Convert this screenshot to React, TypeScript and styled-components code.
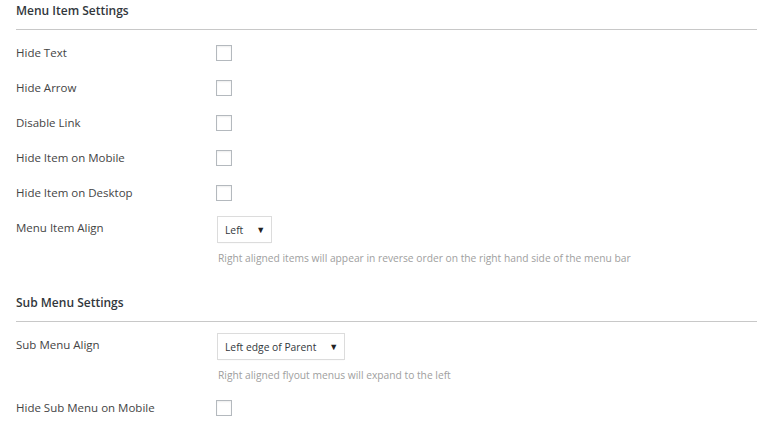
import React from "react";
import styled, { createGlobalStyle } from "styled-components";

const GlobalStyle = createGlobalStyle`
  body {
    margin: 0;
    background: #fff;
    font-family: "Open Sans", "Noto Sans", sans-serif;
  }
`;

type Field =
  | { kind: "check"; label: string }
  | { kind: "select"; label: string; value: string; hint: string };

const menuItemFields: Field[] = [
  { kind: "check", label: "Hide Text" },
  { kind: "check", label: "Hide Arrow" },
  { kind: "check", label: "Disable Link" },
  { kind: "check", label: "Hide Item on Mobile" },
  { kind: "check", label: "Hide Item on Desktop" },
  {
    kind: "select",
    label: "Menu Item Align",
    value: "Left",
    hint: "Right aligned items will appear in reverse order on the right hand side of the menu bar",
  },
];

const subMenuFields: Field[] = [
  {
    kind: "select",
    label: "Sub Menu Align",
    value: "Left edge of Parent",
    hint: "Right aligned flyout menus will expand to the left",
  },
  { kind: "check", label: "Hide Sub Menu on Mobile" },
];

const Settings = ({ title, fields, first }: { title: string; fields: Field[]; first?: boolean }) => (
  <Section $first={first}>
    <SectionTitle>{title}</SectionTitle>
    <Rows>
      {fields.map((f) => (
        <Row key={f.label}>
          <Label>{f.label}</Label>
          {f.kind === "check" ? (
            <Control $top={10}>
              <Checkbox />
            </Control>
          ) : (
            <Control $top={6}>
              <SelectBox>
                <span>{f.value}</span>
                <Arrow>▼</Arrow>
              </SelectBox>
              <Hint>{f.hint}</Hint>
            </Control>
          )}
        </Row>
      ))}
    </Rows>
  </Section>
);

const App: React.FC = () => (
  <>
    <GlobalStyle />
    <Page>
      <Settings title="Menu Item Settings" fields={menuItemFields} first />
      <Settings title="Sub Menu Settings" fields={subMenuFields} />
    </Page>
  </>
);

const Page = styled.div`
  padding: 0 15px 0 16px;
  width: 741px;
`;

const Section = styled.section<{ $first?: boolean }>`
  margin-top: ${(p) => (p.$first ? "0" : "19px")};
`;

const SectionTitle = styled.h3`
  margin: 0;
  font-size: 12px;
  font-weight: 600;
  line-height: 22px;
  color: #32373c;
  padding-bottom: 7px;
  border-bottom: 1px solid #c8c8c8;
`;

const Rows = styled.div`
  margin-top: 5px;
  display: flex;
  flex-direction: column;
`;

const Row = styled.div`
  display: grid;
  grid-template-columns: 200px 1fr;
  align-items: start;
  min-height: 35px;
`;

const Label = styled.div`
  padding: 9px 0;
  font-size: 11.5px;
  line-height: 17px;
  color: #444;
`;

const Control = styled.div<{ $top: number }>`
  padding-top: ${(p) => p.$top}px;
  padding-bottom: 7px;
  display: flex;
  flex-direction: column;
  align-items: flex-start;
`;

const Checkbox = styled.span`
  display: block;
  width: 14px;
  height: 14px;
  border: 1px solid #b4b9be;
  box-shadow: inset 0 1px 2px rgba(0, 0, 0, 0.07);
  background: #fff;
`;

const SelectBox = styled.div`
  margin-left: 1px;
  display: inline-flex;
  align-items: center;
  gap: 13px;
  height: 25px;
  padding: 0 6px 0 7px;
  border: 1px solid #dcdcdc;
  box-shadow: 0 1px 1px -1px rgba(0, 0, 0, 0.1);
  font-size: 10.3px;
  color: #32373c;
`;

const Arrow = styled.span`
  font-size: 9px;
  color: #222;
`;

const Hint = styled.div`
  margin: 7px 0 0 2px;
  font-size: 10.25px;
  line-height: 16px;
  color: #a0a0a0;
`;

export default App;
